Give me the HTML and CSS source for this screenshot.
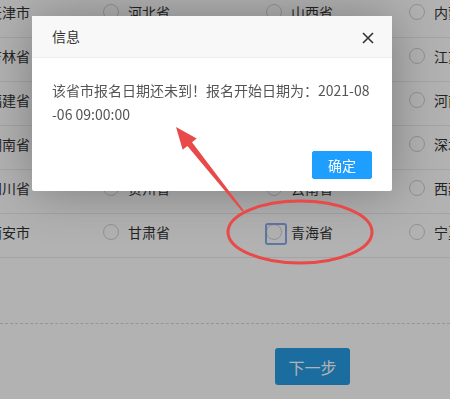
FILE: index.html
```html
<!DOCTYPE html>
<html lang="zh-CN">
<head>
    <meta charset="UTF-8">
    <meta name="viewport" content="width=device-width, initial-scale=1.0">
    <title>选择省份</title>
    <link rel="stylesheet" href="styles.css">
</head>
<body>
    <div class="page">
        <div class="grid">
            <div class="row">
                <label class="cell"><span class="radio"></span>天津市</label>
                <label class="cell"><span class="radio"></span>河北省</label>
                <label class="cell"><span class="radio"></span>山西省</label>
                <label class="cell"><span class="radio"></span>内蒙古</label>
            </div>
            <div class="row">
                <label class="cell"><span class="radio"></span>吉林省</label>
                <label class="cell"><span class="radio"></span>黑龙江</label>
                <label class="cell"><span class="radio"></span>上海市</label>
                <label class="cell"><span class="radio"></span>江苏省</label>
            </div>
            <div class="row">
                <label class="cell"><span class="radio"></span>福建省</label>
                <label class="cell"><span class="radio"></span>江西省</label>
                <label class="cell"><span class="radio"></span>山东省</label>
                <label class="cell"><span class="radio"></span>河南省</label>
            </div>
            <div class="row">
                <label class="cell"><span class="radio"></span>湖南省</label>
                <label class="cell"><span class="radio"></span>广东省</label>
                <label class="cell"><span class="radio"></span>广西省</label>
                <label class="cell"><span class="radio"></span>深圳市</label>
            </div>
            <div class="row">
                <label class="cell"><span class="radio"></span>四川省</label>
                <label class="cell"><span class="radio"></span>贵州省</label>
                <label class="cell"><span class="radio"></span>云南省</label>
                <label class="cell"><span class="radio"></span>西藏</label>
            </div>
            <div class="row">
                <label class="cell"><span class="radio"></span>西安市</label>
                <label class="cell"><span class="radio"></span>甘肃省</label>
                <label class="cell"><span class="radio focus"></span>青海省</label>
                <label class="cell"><span class="radio"></span>宁夏</label>
            </div>
        </div>
        <div class="footer">
            <button type="button" class="btnNext">下一步</button>
        </div>
    </div>

    <div class="shade"></div>

    <div class="dialog">
        <div class="dialogTitle">
            信息
            <svg class="dialogClose" width="12" height="12" viewBox="0 0 12 12">
                <path d="M1 1L11 11M11 1L1 11" stroke="#333" stroke-width="1.6" fill="none"/>
            </svg>
        </div>
        <div class="dialogContent">该省市报名日期还未到！报名开始日期为：2021-08-06 09:00:00</div>
        <div class="dialogBtns">
            <a class="btnOk">确定</a>
        </div>
    </div>

    <svg class="marks" width="450" height="399" viewBox="0 0 450 399">
        <ellipse cx="300" cy="232" rx="72" ry="31" fill="none" stroke="#e84a4a" stroke-width="3"/>
        <polygon fill="#e84a4a" points="243.8,210.4 192,142.3 196.7,138.6 176,127 182.7,149.8 187.4,146.1 242.2,211.6"/>
    </svg>
</body>
</html>
```

FILE: styles.css
```css
*{
    margin: 0;
    padding: 0;
    box-sizing: border-box;
}
html, body{
    width: 450px;
    height: 399px;
    overflow: hidden;
}
body{
    font-family: "Noto Sans CJK SC", "Microsoft YaHei", sans-serif;
    font-size: 14px;
    color: #333;
    background: #fff;
}
.page{
    height: 399px;
    overflow: hidden;
}
.grid{
    margin: -6px 0 0 -37px;
}
.row{
    display: flex;
    height: 44px;
    padding-top: 10px;
    border-bottom: 1px solid #ebebeb;
    white-space: nowrap;
}
.cell{
    display: flex;
    align-items: center;
    gap: 9px;
    height: 16px;
    line-height: 16px;
    flex: none;
}
.cell:nth-child(1){ width: 140px; }
.cell:nth-child(2){ width: 163px; }
.cell:nth-child(3){ width: 143px; }
.radio{
    position: relative;
    width: 16px;
    height: 16px;
    border: 1px solid #d2d2d2;
    border-radius: 50%;
    background: #fff;
    flex: none;
}
.radio.focus::after{
    content: "";
    position: absolute;
    left: -2px;
    top: -2px;
    width: 18px;
    height: 18px;
    border: 2px solid #8aaaea;
    border-radius: 3px;
}
.footer{
    margin-top: 65px;
    border-top: 1px dashed #d6d6d6;
    padding: 24px 0 0 275px;
}
.btnNext{
    width: 75px;
    height: 37px;
    border: none;
    border-radius: 3px;
    background: #279de5;
    color: #fff;
    font-family: inherit;
    font-size: 16px;
}
.shade{
    position: fixed;
    inset: 0;
    background: rgba(0, 0, 0, .3);
}
.dialog{
    position: absolute;
    left: 32px;
    top: 16px;
    width: 360px;
    background: #fff;
    border-radius: 2px;
    box-shadow: 1px 1px 50px rgba(0, 0, 0, .3);
}
.dialogTitle{
    position: relative;
    height: 42px;
    line-height: 41px;
    padding: 0 80px 0 20px;
    background: #f8f8f8;
    border-bottom: 1px solid #eee;
    color: #333;
}
.dialogClose{
    position: absolute;
    right: 18px;
    top: 16px;
}
.dialogContent{
    padding: 20px;
    line-height: 24px;
    word-break: break-all;
    color: #555;
}
.dialogBtns{
    display: flex;
    justify-content: flex-end;
    padding: 0 15px 12px;
}
.btnOk{
    height: 28px;
    line-height: 26px;
    margin: 5px 5px 0;
    padding: 0 15px;
    border: 1px solid #1e9fff;
    border-radius: 2px;
    background: #1e9fff;
    color: #fff;
}
.marks{
    position: absolute;
    left: 0;
    top: 0;
    pointer-events: none;
}
```
